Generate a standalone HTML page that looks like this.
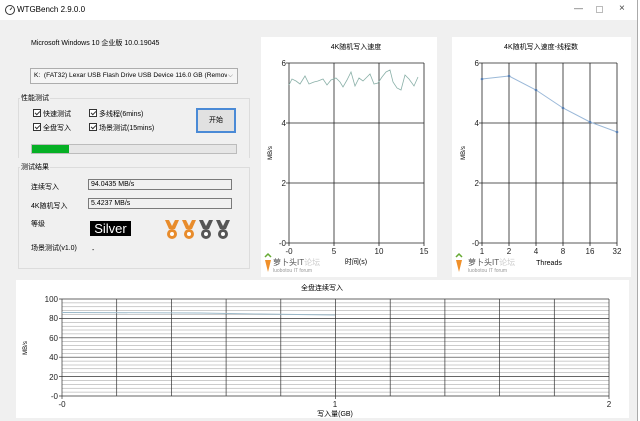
<!DOCTYPE html>
<html><head><meta charset="utf-8"><style>
*{margin:0;padding:0;box-sizing:border-box}
body{width:640px;height:421px;overflow:hidden;background:#f0f0f0;font-family:"Liberation Sans","Noto Sans CJK SC",sans-serif;font-size:7px;color:#000;position:relative}
.a{position:absolute;white-space:nowrap}
.cb{position:absolute;width:8px;height:8px;border:1px solid #333;background:#fff}
.cb:after{content:"";position:absolute;left:2px;top:0px;width:2px;height:4px;border:solid #333;border-width:0 1px 1px 0;transform:rotate(45deg)}
.tb{position:absolute;background:#f0f0f0;border:1px solid #7a7a7a;padding:1px 2px;font-size:7px}
.grp{position:absolute;border:1px solid #dcdcdc}
.lbl{background:#f0f0f0;padding:0 1px;z-index:2}
</style></head><body>
<div class="a" style="left:0;top:0;width:640px;height:20px;background:#fff"></div>
<svg class="a" style="left:4px;top:4px" width="12" height="12" viewBox="0 0 12 12"><circle cx="6" cy="6" r="4.5" fill="none" stroke="#333" stroke-width="1"/><path d="M6 6 L8 3.5" stroke="#333" stroke-width="1"/></svg>
<div class="a" style="left:17px;top:5px;font-size:8px">WTGBench 2.9.0.0</div>
<div class="a" style="left:574px;top:3px;font-size:9px;color:#555">—</div>
<div class="a" style="left:596px;top:6px;width:7px;height:7px;border:1px solid #bbb"></div>
<div class="a" style="left:619px;top:3px;font-size:10px;color:#444">×</div>
<div class="a" style="left:637px;top:0;width:3px;height:421px;background:#fff;border-left:1px solid #aaa"></div>

<div class="a" style="left:31px;top:38px">Microsoft Windows 10 企业版 10.0.19045</div>
<div class="a" style="left:30px;top:68px;width:208px;height:16px;border:1px solid #adadad;background:#f5f5f5;padding:3px 3px;overflow:hidden;font-size:6.6px">K:&nbsp; (FAT32) Lexar USB Flash Drive USB Device 116.0 GB (Removable I<span style="position:absolute;right:0;top:0;width:10px;height:14px;background:#f5f5f5;color:#555;padding:3px 1px">⌵</span></div>

<div class="grp" style="left:18px;top:98px;width:232px;height:60px;border-bottom:none"></div>
<div class="a lbl" style="left:20px;top:93px">性能测试</div>
<div class="cb" style="left:33px;top:109px"></div><div class="a" style="left:43px;top:109px">快速测试</div>
<div class="cb" style="left:33px;top:123px"></div><div class="a" style="left:43px;top:123px">全盘写入</div>
<div class="cb" style="left:89px;top:109px"></div><div class="a" style="left:99px;top:109px">多线程(6mins)</div>
<div class="cb" style="left:89px;top:123px"></div><div class="a" style="left:99px;top:123px">场景测试(15mins)</div>
<div class="a" style="left:196px;top:108px;width:40px;height:25px;border:2px solid #4a8ad6;background:#e1e1e1;text-align:center;line-height:21px">开始</div>
<div class="a" style="left:31px;top:144px;width:206px;height:10px;background:#e6e6e6;border:1px solid #bcbcbc"><div style="width:37px;height:8px;background:#06b025"></div></div>

<div class="grp" style="left:18px;top:167px;width:232px;height:102px"></div>
<div class="a lbl" style="left:20px;top:162px">测试结果</div>
<div class="a" style="left:31px;top:182px">连续写入</div>
<div class="tb" style="left:88px;top:179px;width:144px;height:11px;line-height:7px">94.0435 MB/s</div>
<div class="a" style="left:31px;top:201px">4K随机写入</div>
<div class="tb" style="left:88px;top:198px;width:144px;height:11px;line-height:7px">5.4237 MB/s</div>
<div class="a" style="left:31px;top:219px">等级</div>
<div class="a" style="left:90px;top:221px;width:41px;height:15px;background:#000;color:#fff;font-size:13px;line-height:15px;text-align:center">Silver</div>
<svg class="a" style="left:164px;top:219px" width="70" height="23" viewBox="0 0 70 23">
<g><path d="M1 1h4l3 6 3-6h4l-4 9h-6z" fill="#e88c2c"/><circle cx="8" cy="15" r="5" fill="#e88c2c"/><circle cx="8" cy="15" r="2" fill="#fff"/></g>
<g transform="translate(17,0)"><path d="M1 1h4l3 6 3-6h4l-4 9h-6z" fill="#e88c2c"/><circle cx="8" cy="15" r="5" fill="#e88c2c"/><circle cx="8" cy="15" r="2" fill="#fff"/></g>
<g transform="translate(34,0)"><path d="M1 1h4l3 6 3-6h4l-4 9h-6z" fill="#555"/><circle cx="8" cy="15" r="5" fill="#555"/><circle cx="8" cy="15" r="2" fill="#fff"/></g>
<g transform="translate(51,0)"><path d="M1 1h4l3 6 3-6h4l-4 9h-6z" fill="#555"/><circle cx="8" cy="15" r="5" fill="#555"/><circle cx="8" cy="15" r="2" fill="#fff"/></g>
</svg>
<div class="a" style="left:31px;top:243px">场景测试(v1.0)</div>
<div class="a" style="left:92px;top:247px">-</div>

<svg class="a" style="left:0;top:0" width="640" height="421" font-family="Liberation Sans, Noto Sans CJK SC, sans-serif">
<rect x="261" y="37" width="176" height="240" fill="#fff"/>
<rect x="452" y="37" width="179" height="240" fill="#fff"/>
<rect x="16" y="280" width="613" height="138" fill="#fff"/>
<text x="356" y="49" font-size="7" text-anchor="middle">4K随机写入速度</text>
<g stroke="#222" stroke-width="0.8"><path d="M289 63H424M289 123H424M289 183H424M289 243H424M289 63V246M334 63V246M379 63V246M424 63V246M286 63H289M286 123H289M286 183H289M286 243H289"/></g>
<g font-size="8" fill="#222" text-anchor="end"><text x="286" y="66">6</text><text x="286" y="126">4</text><text x="286" y="186">2</text><text x="286" y="246">-0</text></g>
<g font-size="8" fill="#222" text-anchor="middle"><text x="289" y="254">-0</text><text x="334" y="254">5</text><text x="379" y="254">10</text><text x="424" y="254">15</text></g>
<text x="356" y="264" font-size="7" text-anchor="middle">时间(s)</text>
<text x="272" y="153" font-size="6" transform="rotate(-90 272 153)" text-anchor="middle">MB/s</text>
<polyline fill="none" stroke="#8ab0a8" stroke-width="0.8" points="289,85 292,79 296,81 300,84 305,76 309,84 314,82 318,81 323,79 327,85 331,80 336,78 340,82 343,87 347,80 351,72 355,86 359,78 363,81 367,77 370,74 374,84 378,83 382,77 386,72 390,70 393,82 397,88 401,90 405,75 409,79 414,86 418,77"/>
<text x="541" y="49" font-size="7" text-anchor="middle">4K随机写入速度-线程数</text>
<g stroke="#222" stroke-width="0.8"><path d="M482 63H617M482 123H617M482 183H617M482 243H617M482 63V246M509 63V246M536 63V246M563 63V246M590 63V246M617 63V246M479 63H482M479 123H482M479 183H482M479 243H482"/></g>
<g font-size="8" fill="#222" text-anchor="end"><text x="479" y="66">6</text><text x="479" y="126">4</text><text x="479" y="186">2</text><text x="479" y="246">-0</text></g>
<g font-size="8" fill="#222" text-anchor="middle"><text x="482" y="254">1</text><text x="509" y="254">2</text><text x="536" y="254">4</text><text x="563" y="254">8</text><text x="590" y="254">16</text><text x="617" y="254">32</text></g>
<text x="549" y="265" font-size="7" text-anchor="middle">Threads</text>
<text x="465" y="153" font-size="6" transform="rotate(-90 465 153)" text-anchor="middle">MB/s</text>
<polyline fill="none" stroke="#9ab8d8" stroke-width="1" points="482,79 509,76 536,90 563,108 590,122 617,132"/>
<g fill="#5a7fb0"><circle cx="482" cy="79" r="1.3"/><circle cx="509" cy="76" r="1.3"/><circle cx="536" cy="90" r="1.3"/><circle cx="563" cy="108" r="1.3"/><circle cx="590" cy="122" r="1.3"/><circle cx="617" cy="132" r="1.3"/></g>
<g><path d="M265 260l6 0-3 12z" fill="#f0902a"/><path d="M265 257l3-3 3 3" stroke="#6a3" fill="none" stroke-width="1.5"/></g>
<text x="273" y="265" font-size="8" fill="#555">萝卜头IT<tspan fill="#ccc">论坛</tspan></text>
<text x="273" y="272" font-size="5" fill="#999">luobotou IT forum</text>
<g><path d="M456 260l6 0-3 12z" fill="#f0902a"/><path d="M456 257l3-3 3 3" stroke="#6a3" fill="none" stroke-width="1.5"/></g>
<text x="468" y="265" font-size="8" fill="#555">萝卜头IT<tspan fill="#ccc">论坛</tspan></text>
<text x="468" y="272" font-size="5" fill="#999">luobotou IT forum</text>
<text x="322" y="290" font-size="7" text-anchor="middle">全盘连续写入</text>
<g stroke="#999" stroke-width="0.5">
<path d="M62 302.9H609M62 306.8H609M62 310.6H609M62 314.5H609M62 322.3H609M62 326.2H609M62 330.0H609M62 333.9H609M62 341.7H609M62 345.6H609M62 349.4H609M62 353.3H609M62 361.1H609M62 365.0H609M62 368.8H609M62 372.7H609M62 380.5H609M62 384.4H609M62 388.2H609M62 392.1H609"/></g>
<g stroke="#333" stroke-width="0.7">
<path d="M62 299H609M62 318.4H609M62 337.8H609M62 357.2H609M62 376.6H609M62 396H609"/>
<path d="M62 299V399M116.7 299V396M171.4 299V396M226.1 299V396M280.8 299V396M335.5 299V399M390.2 299V396M444.9 299V396M499.6 299V396M554.3 299V396M609 299V399"/>
<path d="M59 299H62M59 318.4H62M59 337.8H62M59 357.2H62M59 376.6H62M59 396H62"/></g>
<g font-size="8" fill="#222" text-anchor="end"><text x="58" y="302">100</text><text x="58" y="321">80</text><text x="58" y="341">60</text><text x="58" y="360">40</text><text x="58" y="380">20</text><text x="58" y="399">-0</text></g>
<g font-size="8" fill="#222" text-anchor="middle"><text x="62" y="407">-0</text><text x="335" y="407">1</text><text x="609" y="407">2</text></g>
<text x="335" y="416" font-size="7" text-anchor="middle">写入量(GB)</text>
<text x="27" y="348" font-size="6" transform="rotate(-90 27 348)" text-anchor="middle">MB/s</text>
<polyline fill="none" stroke="#9ab8c8" stroke-width="0.9" points="62,312.5 200,313 260,314 335,315"/>
</svg>
</body></html>
